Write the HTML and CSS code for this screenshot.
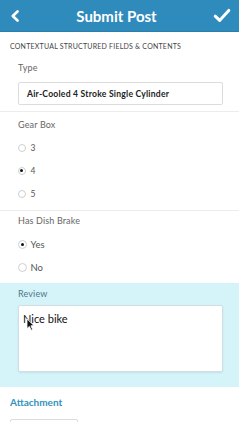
FILE: index.html
```html
<!DOCTYPE html>
<html>
<head>
<meta charset="utf-8">
<link rel="stylesheet" href="styles.css">
</head>
<body>
<header class="topbar">
  <svg class="back" width="10" height="12" viewBox="0 0 10 12"><path d="M7.5 1.5 L2.8 6 L7.5 10.5" fill="none" stroke="#fff" stroke-width="2.6" stroke-linecap="round" stroke-linejoin="round"/></svg>
  <h1 class="title">Submit Post</h1>
  <svg class="check" width="18" height="15" viewBox="0 0 18 15"><path d="M2.2 8.2 L6.6 12.4 L15.8 2.4" fill="none" stroke="#fff" stroke-width="3" stroke-linecap="round" stroke-linejoin="round"/></svg>
</header>
<div class="section-head">CONTEXTUAL STRUCTURED FIELDS &amp; CONTENTS</div>
<div class="field field-type">
  <div class="label">Type</div>
  <div class="input">Air-Cooled 4 Stroke Single Cylinder</div>
</div>
<div class="field field-gear">
  <div class="label">Gear Box</div>
  <div class="radios">
    <div class="radio"><span class="dot"></span>3</div>
    <div class="radio on"><span class="dot"></span>4</div>
    <div class="radio"><span class="dot"></span>5</div>
  </div>
</div>
<div class="field field-brake">
  <div class="label">Has Dish Brake</div>
  <div class="radios">
    <div class="radio big on"><span class="dot"></span>Yes</div>
    <div class="radio big"><span class="dot"></span>No</div>
  </div>
</div>
<div class="review">
  <div class="label review-label">Review</div>
  <div class="textarea">Nice bike
    <svg class="cursor" width="9" height="13" viewBox="0 0 9 13"><path d="M1 1 L1 10.5 L3.4 8.4 L5.2 12.2 L6.6 11.5 L4.9 7.8 L8 7.6 Z" fill="#111" stroke="#fff" stroke-width="0.8"/></svg>
  </div>
</div>
<div class="attach">
  <div class="attach-label">Attachment</div>
  <div class="attach-box"></div>
</div>
</body>
</html>
```
FILE: styles.css
```css
* { box-sizing: border-box; }
html, body { margin: 0; padding: 0; background: #fff; }
body {
  width: 239px;
  height: 422px;
  overflow: hidden;
  font-family: Lato, "Open Sans", "Liberation Sans", sans-serif;
  color: #333;
}
.topbar {
  height: 32px;
  background: #2f8bbb;
  display: flex;
  align-items: center;
  justify-content: space-between;
  padding: 0 8px 0 10px;
  border-bottom: 1px solid #2a7eaa;
}
.back { display: block; margin-top: 1px; }
.check { display: block; margin-top: -1px; }
.title {
  margin: 0;
  font-size: 15px;
  font-weight: 700;
  color: #fff;
}
.section-head {
  padding: 9px 10px 6px;
  font-size: 7px;
  line-height: 10px;
  color: #444;
  letter-spacing: 0.22px;
}
.label {
  font-size: 9px;
  line-height: 10px;
  color: #666;
  letter-spacing: 0.15px;
}
.field { padding-left: 18px; padding-right: 16px; }
.field-type {
  padding-top: 6px;
  padding-bottom: 6px;
  border-bottom: 1px solid #ececec;
}
.input {
  margin-top: 9px;
  height: 23px;
  border: 1px solid #dcdcdc;
  border-radius: 2px;
  padding-left: 8px;
  display: flex;
  align-items: center;
  font-size: 8.6px;
  font-weight: 700;
  color: #222;
  letter-spacing: 0.22px;
}
.field-gear {
  padding-top: 8px;
  padding-bottom: 5px;
  border-bottom: 1px solid #ececec;
}
.field-brake {
  padding-top: 5px;
  padding-bottom: 4px;
}
.radios { margin-top: 6px; }
.field-brake .radios { margin-top: 7px; }
.radio {
  height: 23px;
  display: flex;
  align-items: center;
  font-size: 8.5px;
  color: #555;
}
.radio.big { font-size: 9.5px; }
.dot {
  width: 8px;
  height: 8px;
  border: 1px solid #cfcfcf;
  border-radius: 50%;
  margin-left: -0.5px;
  margin-right: 5px;
  display: flex;
  align-items: center;
  justify-content: center;
}
.radio.big .dot { width: 9px; height: 9px; margin-right: 4px; }
.radio.on .dot::after {
  content: "";
  width: 3px;
  height: 3px;
  border-radius: 50%;
  background: #111;
}
.review {
  background: #d5f4fa;
  padding: 6px 16px 15px 18px;
}
.review-label { color: #4f7785; }
.textarea {
  position: relative;
  margin-top: 6px;
  height: 67px;
  background: #fff;
  border: 1px solid #cfdfe3;
  border-radius: 2px;
  box-shadow: 0 1px 2px rgba(0,0,0,0.08);
  padding: 6px 0 0 4px;
  font-size: 11px;
  line-height: 14px;
  color: #111;
}
.cursor {
  position: absolute;
  left: 7px;
  top: 12px;
}
.attach { padding: 10px 10px 0; }
.attach-label {
  font-size: 10px;
  line-height: 10px;
  font-weight: 700;
  color: #3192bd;
}
.attach-box {
  margin-top: 12px;
  width: 68px;
  height: 20px;
  border: 1px solid #dcdcdc;
  border-radius: 2px;
}
```
